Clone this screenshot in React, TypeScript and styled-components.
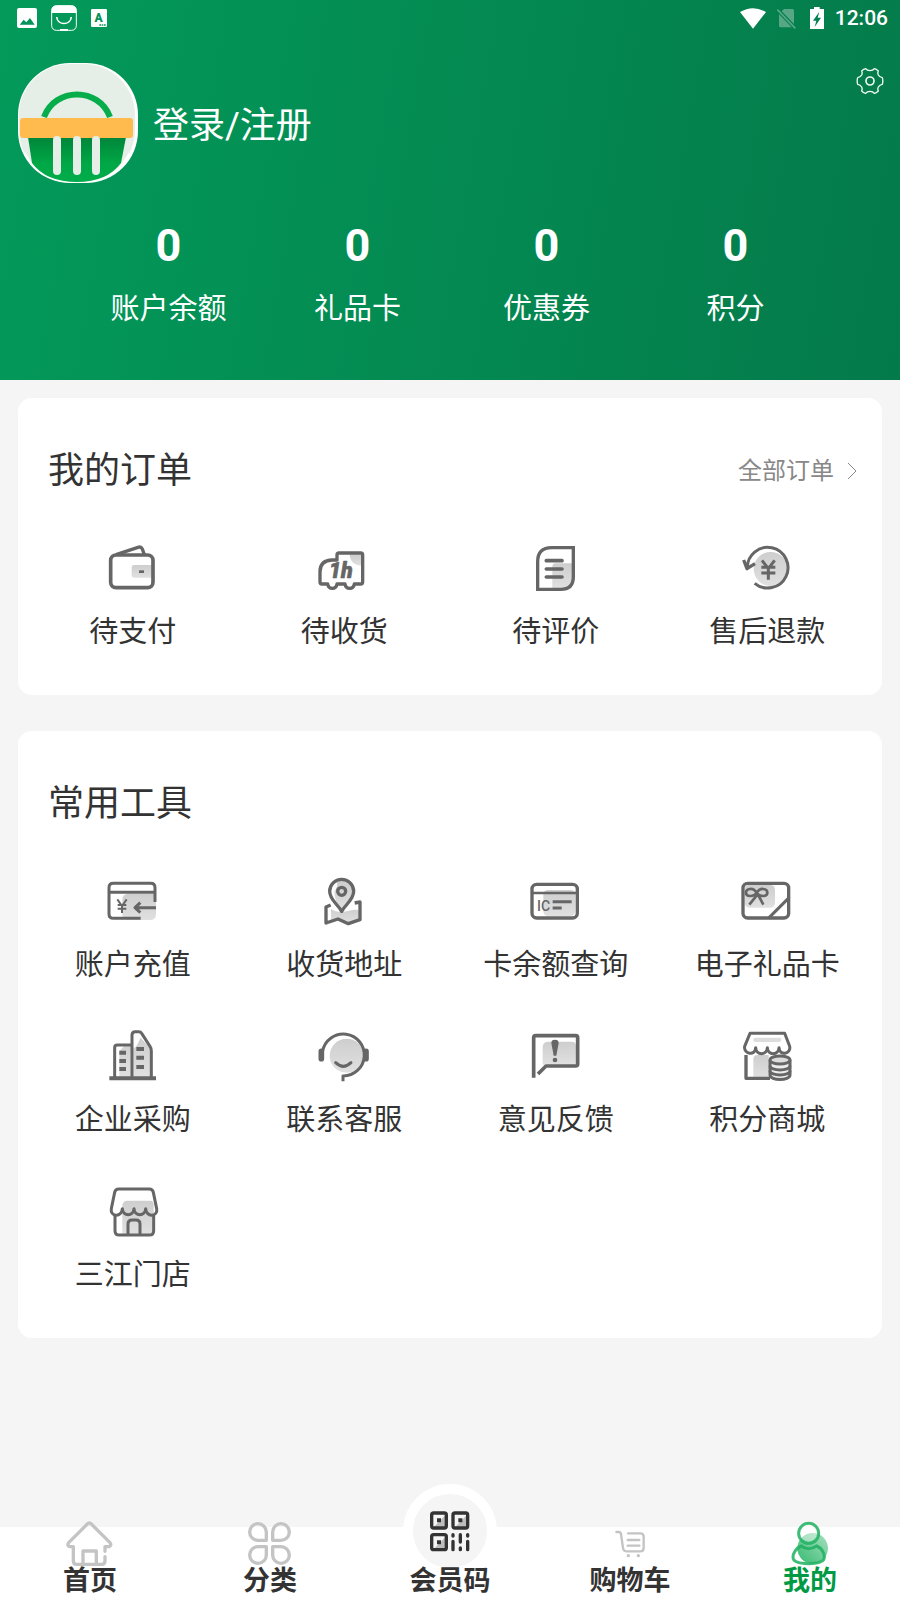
import React from "react";
import styled, { createGlobalStyle, css } from "styled-components";

const INK = "#666666";
const SHADE = "url(#shade)";

const GlobalStyle = createGlobalStyle`
  *, *::before, *::after { box-sizing: border-box; }
  body {
    margin: 0;
    background: #f5f5f5;
    color: #333333;
    font-family: Roboto, "Noto Sans CJK SC", sans-serif;
  }
  button { font: inherit; color: inherit; background: none; border: 0; padding: 0; cursor: pointer; }
  a { color: inherit; text-decoration: none; }
  h1, h2, p { margin: 0; font-weight: 400; }
  svg { display: block; flex: none; }
`;

const Page = styled.div`
  min-height: 100vh;
  display: flex;
  flex-direction: column;
`;

const Header = styled.header`
  color: #ffffff;
  background: linear-gradient(100deg, #039a5a 0%, #047a4a 100%);
  padding-bottom: 51px;
`;

const StatusBar = styled.div`
  height: 36px;
  padding: 0 12px 0 17px;
  display: flex;
  align-items: center;
  justify-content: space-between;
`;

const StatusGroup = styled.div<{ $gap: number }>`
  display: flex;
  align-items: center;
  gap: ${(p) => p.$gap}px;
`;

const Clock = styled.time`
  font-size: 21px;
  line-height: 24px;
  font-weight: 500;
`;

const Profile = styled.div`
  display: flex;
  align-items: flex-start;
  padding: 27px 16px 0 18px;
`;

const LoginButton = styled.button`
  display: flex;
  align-items: center;
  gap: 15px;
  font-size: 36px;
  line-height: 48px;
`;

const LoginText = styled.span`
  padding-top: 6px;
`;

const SettingsButton = styled.button`
  margin-left: auto;
  padding-top: 4px;
`;

const Stats = styled.div`
  display: grid;
  grid-template-columns: repeat(4, 1fr);
  padding: 34px 70px 0 74px;
`;

const Stat = styled.button`
  display: flex;
  flex-direction: column;
  align-items: center;
  gap: 15px;
  font-size: 29px;
  line-height: 40px;
`;

const StatValue = styled.strong`
  font-size: 45px;
  line-height: 57px;
  font-weight: 700;
`;

const Main = styled.main`
  flex: 1;
  display: flex;
  flex-direction: column;
  gap: 36px;
  padding: 18px 18px 36px;
`;

const Card = styled.section`
  background: #ffffff;
  border-radius: 14px;
  padding: 43px 9px;
`;

const CardHead = styled.div`
  height: 60px;
  padding: 0 16px 0 21px;
  display: flex;
  align-items: center;
  justify-content: space-between;
`;

const CardTitle = styled.h2`
  font-size: 36px;
  line-height: 48px;
`;

const MoreLink = styled.a`
  display: flex;
  align-items: center;
  gap: 13px;
  font-size: 24px;
  line-height: 32px;
  color: #888888;
`;

const ToolGrid = styled.div`
  display: grid;
  grid-template-columns: repeat(4, 1fr);
  row-gap: 44px;
  padding-top: 40px;
`;

const Tool = styled.button`
  display: flex;
  flex-direction: column;
  align-items: center;
  gap: 17px;
  font-size: 29px;
  line-height: 40px;
  white-space: nowrap;
`;

const TabBar = styled.nav`
  height: 73px;
  background: #ffffff;
  display: grid;
  grid-template-columns: repeat(5, 1fr);
`;

const Tab = styled.a<{ $active?: boolean }>`
  height: 73px;
  display: flex;
  flex-direction: column;
  align-items: center;
  justify-content: flex-end;
  padding-bottom: 2px;
  color: ${(p) => (p.$active ? "#009944" : "#333333")};
`;

const TabIcon = styled.span<{ $raised?: boolean }>`
  display: flex;
  align-items: center;
  justify-content: center;
  flex: none;
  ${(p) =>
    p.$raised
      ? css`
          width: 94px;
          height: 94px;
          border: 10px solid #ffffff;
          border-radius: 50%;
          background: #f5f5f5;
          margin-bottom: -14px;
        `
      : css`
          width: 48px;
          height: 48px;
          margin-bottom: -4px;
        `}
`;

const TabLabel = styled.span`
  position: relative;
  flex: none;
  font-size: 27px;
  line-height: 34px;
  font-weight: 700;
`;

const LineIcon = ({ children }: { children: React.ReactNode }) => (
  <svg width="54" height="54" viewBox="0 0 162 162" fill="none" stroke={INK} strokeWidth="10" strokeLinejoin="round" aria-hidden="true">
    {children}
  </svg>
);

const GrayIcon = ({ children }: { children: React.ReactNode }) => (
  <svg width="48" height="48" viewBox="0 0 144 144" fill="none" stroke="#c4c4c4" strokeWidth="10" strokeLinecap="round" strokeLinejoin="round" aria-hidden="true">
    {children}
  </svg>
);

const Shades = () => (
  <svg width="0" height="0" aria-hidden="true">
    <defs>
      <linearGradient id="shade" x1="0" y1="0" x2="0" y2="1">
        <stop offset="0" stopColor="#cecece" />
        <stop offset="1" stopColor="#e0e0e0" />
      </linearGradient>
      <linearGradient id="basket" x1="0" y1="0" x2="0" y2="1">
        <stop offset="0" stopColor="#00853a" />
        <stop offset="0.6" stopColor="#00a846" />
        <stop offset="1" stopColor="#00ac4b" />
      </linearGradient>
      <linearGradient id="person" x1="0" y1="1" x2="1" y2="0">
        <stop offset="0" stopColor="#35bb70" />
        <stop offset="1" stopColor="#a9dfc0" />
      </linearGradient>
    </defs>
  </svg>
);

const Avatar = () => (
  <svg width="120" height="120" viewBox="0 0 120 120" aria-hidden="true">
    <rect width="120" height="120" rx="52" fill="#ffffff" />
    <rect x="1" y="1" width="116" height="117" rx="51" fill="#e6eee8" />
    <path d="M14 100Q28 119 59 119Q90 119 104 100L112 88Q104 119 60 120Q14 119 6 88Z" fill="#ffffff" />
    <path d="M10 74H108L103 100Q89 119 59 119Q28 119 14 100Z" fill="url(#basket)" />
    <path d="M26 54C37 24 81 24 92 54" fill="none" stroke="#08ad4b" strokeWidth="6" />
    <rect x="2" y="55" width="113" height="20" rx="3" fill="#ffbb4d" />
    <path d="M39 77V108M59 77V108M78 77V108" stroke="#e6eee8" strokeWidth="8" strokeLinecap="round" />
  </svg>
);

const Gear = () => (
  <svg width="28" height="28" viewBox="0 0 84 84" fill="none" stroke="#f2faf6" strokeWidth="4" strokeLinejoin="round" aria-hidden="true">
    <path d="M29 5Q33 11 42 11Q51 11 55 5Q61 6 67 12Q64 18 67 24Q71 31 79 32Q82 42 79 52Q71 53 67 60Q64 66 67 72Q61 78 55 79Q51 73 42 73Q33 73 29 79Q23 78 17 72Q20 66 17 60Q13 53 5 52Q2 42 5 32Q13 31 17 24Q20 18 17 12Q23 6 29 5Z" />
    <circle cx="42" cy="42" r="12" strokeWidth="5" />
  </svg>
);

const PictureGlyph = () => (
  <svg width="20" height="20" viewBox="0 0 60 60" aria-hidden="true">
    <rect width="60" height="60" rx="6" fill="#ffffff" />
    <path d="M8 50L20 35L28 43L39 30L53 50Z" fill="#05935a" />
  </svg>
);

const BagGlyph = () => (
  <svg width="26" height="26" viewBox="0 0 78 78" aria-hidden="true">
    <rect x="2" y="2" width="74" height="74" rx="14" fill="none" stroke="#ffffff" strokeWidth="3" />
    <path d="M2 24V16Q2 2 16 2H62Q76 2 76 16V24Z" fill="#ffffff" />
    <path d="M17 36C20 62 58 62 61 36" fill="none" stroke="#ffffff" strokeWidth="5" />
    <path d="M27 75H51" stroke="#ffffff" strokeWidth="6" />
  </svg>
);

const LetterGlyph = () => (
  <svg width="16" height="18" viewBox="0 0 48 54" aria-hidden="true">
    <rect width="48" height="54" rx="4" fill="#ffffff" />
    <text x="23" y="39" textAnchor="middle" fontFamily="Roboto, sans-serif" fontWeight="900" fontSize="36" fill="#05935a">A</text>
    <path d="M25 48H30M32 48H37M39 48H44" stroke="#05935a" strokeWidth="4" />
  </svg>
);

const WifiGlyph = () => (
  <svg width="26" height="21" viewBox="0 0 78 63" aria-hidden="true">
    <path d="M0 12Q39 -11 78 12L39 62Z" fill="#ffffff" />
  </svg>
);

const NoSimGlyph = () => (
  <svg width="22" height="21" viewBox="0 0 66 63" aria-hidden="true">
    <path d="M21 3H46Q51 3 51 8V49L14 10ZM6 16L46 58H11Q6 58 6 53Z" fill="#57a786" />
    <path d="M1 5L55 61" stroke="#047f4d" strokeWidth="11" />
    <path d="M1 5L55 61" stroke="#57a786" strokeWidth="5" />
  </svg>
);

const BatteryGlyph = () => (
  <svg width="14" height="22" viewBox="0 0 42 66" aria-hidden="true">
    <path d="M0 6H12V0H29V6H42V66H0Z" fill="#ffffff" />
    <path d="M28 14L9 41H19L14 60L33 32H23Z" fill="#047f4d" />
  </svg>
);

const WalletIcon = () => (
  <LineIcon>
    <path d="M141 72H84Q77 72 77 79V103Q77 110 84 110H141Z" fill={SHADE} stroke="none" />
    <path d="M30 41L96 19Q105 16 109 24L115 41" />
    <rect x="14" y="42" width="127" height="98" rx="16" strokeWidth="11" />
    <path d="M99 92H114" strokeWidth="8" />
  </LineIcon>
);

const TruckIcon = () => (
  <LineIcon>
    <path d="M98 40H133V74C112 74 98 60 98 40Z" fill={SHADE} stroke="none" />
    <path d="M60 57V42Q60 36 66 36H131Q137 36 137 42V123Q137 129 131 129H112Q110 142 98 142Q86 142 84 129H60Q58 142 46 142Q34 142 32 129H15Q9 129 9 123V92Q9 58 46 57Z" />
    <text x="36" y="111" fontFamily="Roboto, sans-serif" fontStyle="italic" fontWeight="900" fontSize="64" fill={INK} stroke={INK} strokeWidth="2">1h</text>
  </LineIcon>
);

const ReviewIcon = () => (
  <LineIcon>
    <path d="M80 67H133V107Q133 143 95 143H70V77Q70 67 80 67Z" fill={SHADE} stroke="none" />
    <path d="M26 145V62Q26 20 68 20H133V107Q133 145 95 145Z" strokeLinejoin="miter" />
    <path d="M52 59H99M52 84H99M52 108H99" strokeLinecap="round" strokeWidth="11" />
  </LineIcon>
);

const RefundIcon = () => (
  <LineIcon>
    <circle cx="92" cy="84" r="51" fill={SHADE} stroke="none" />
    <path d="M22 82A61 61 0 1 1 44 127" strokeWidth="9" />
    <path d="M11 57L21 83L45 68" />
    <path d="M66 58L85 83L104 58M85 83V116M64 79H106M64 96H106" strokeWidth="9" />
  </LineIcon>
);

const RechargeIcon = () => (
  <LineIcon>
    <path d="M68 59H150V120Q150 138 132 138H68Q49 138 49 120V78Q49 59 68 59Z" fill={SHADE} stroke="none" />
    <path d="M104 133H22Q9 133 9 120V41Q9 28 22 28H134Q147 28 147 41V84M9 55H147" strokeWidth="9" />
    <path d="M150 101H88M103 86L87 101L103 116" strokeWidth="9" />
    <path d="M34 76L48 96L62 76M48 96V117M35 93H61M35 104H61" strokeWidth="6" />
  </LineIcon>
);

const AddressIcon = () => (
  <LineIcon>
    <path d="M42 104Q60 118 90 112Q114 104 128 110V137L94 149L63 135L42 140Z" fill={SHADE} stroke="none" />
    <path d="M60 24Q106 10 110 50C110 75 86 92 74 112Q52 82 52 52Q62 42 60 24Z" fill={SHADE} stroke="none" />
    <path d="M74 112C62 90 38 78 38 52A36 36 0 0 1 110 52C110 78 86 90 74 112Z" />
    <circle cx="74" cy="52" r="12" />
    <path d="M41 93L27 99V147L63 135L94 149L129 137V84L113 87" />
  </LineIcon>
);

const CardIcon = () => (
  <LineIcon>
    <rect x="43" y="48" width="96" height="78" rx="14" fill={SHADE} stroke="none" />
    <rect x="9" y="31" width="136" height="101" rx="14" />
    <path d="M9 57H145" strokeWidth="8" />
    <text x="24" y="110" fontFamily="Roboto, sans-serif" fontWeight="500" fontSize="42" fill={INK} stroke="none">IC</text>
    <path d="M71 83H128M71 102H98" strokeWidth="9" />
  </LineIcon>
);

const GiftCardIcon = () => (
  <LineIcon>
    <rect x="14" y="33" width="91" height="68" rx="14" fill={SHADE} stroke="none" />
    <rect x="9" y="28" width="137" height="104" rx="14" />
    <path d="M145 73L85 133" strokeWidth="9" />
    <path d="M50 57C40 38 18 44 18 56C18 68 40 70 50 57C60 38 82 44 82 56C82 68 60 70 50 57ZM52 62L28 92M54 62L70 92" strokeWidth="8" />
  </LineIcon>
);

const CompanyIcon = () => (
  <LineIcon>
    <path d="M54 52H78V146H40V66ZM92 50L104 26L136 62V146H82V60Z" fill={SHADE} stroke="none" />
    <path d="M26 146V56Q26 48 34 48H78" strokeWidth="9" />
    <path d="M78 146V18Q78 8 88 8H98Q104 8 107 13L132 52Q136 58 136 66V146" strokeWidth="9" />
    <path d="M10 148H150M40 71H60M40 96H60M40 120H60M91 60H114M91 86H114M91 114H114" strokeWidth="12" />
  </LineIcon>
);

const ServiceIcon = () => (
  <LineIcon>
    <circle cx="89" cy="80" r="51" fill={SHADE} stroke="none" />
    <path d="M17 66A63 63 0 1 1 78 141V157" strokeWidth="9" />
    <path d="M13 67V89M147 67V89" strokeLinecap="round" strokeWidth="17" />
    <path d="M56 101Q79 123 102 101" strokeLinecap="round" strokeWidth="9" />
  </LineIcon>
);

const FeedbackIcon = () => (
  <LineIcon>
    <path d="M58 38H128Q141 38 141 51V107H41V55Q41 38 58 38Z" fill={SHADE} stroke="none" />
    <path d="M14 146V26Q14 20 20 20H140Q146 20 146 26V105Q146 111 140 111H51L27 135" strokeWidth="11" />
    <path d="M67 42Q67 32 78 32Q89 32 89 42L82 80H74Z" fill={INK} stroke="none" />
    <circle cx="78" cy="93" r="7" fill={INK} stroke="none" />
  </LineIcon>
);

const PointsIcon = () => (
  <LineIcon>
    <rect x="40" y="26" width="84" height="13" rx="6" fill="#dddddd" stroke="none" />
    <path d="M52 78H86V146H40V92Q40 78 52 78Z" fill={SHADE} stroke="none" />
    <path d="M30 13H134L149 52C154 76 118 82 117 56C116 80 83 80 82 56C81 80 48 80 47 56C46 82 10 76 14 52Z" strokeWidth="9" />
    <path d="M18 78V148H90" />
    <path d="M90 93V138C90 156 150 156 150 138V93" fill="#ececec" strokeWidth="9" />
    <ellipse cx="120" cy="93" rx="30" ry="12" fill="#dddddd" strokeWidth="9" />
    <path d="M90 110C90 127 150 127 150 110M90 125C90 142 150 142 150 125" strokeWidth="9" />
  </LineIcon>
);

const StoreIcon = () => (
  <LineIcon>
    <path d="M66 50H132Q143 50 143 62V150H49V66Q49 50 66 50Z" fill={SHADE} stroke="none" />
    <path d="M38 15H130Q140 15 142 25L152 74C157 98 120 102 119 74C118 98 85 98 84 74C83 98 50 98 49 74C48 102 11 98 16 74L26 25Q28 15 38 15Z" strokeWidth="9" />
    <path d="M27 95V140Q27 153 40 153H130Q143 153 143 140V95M66 153V120Q66 108 78 108H90Q102 108 102 120V153" strokeWidth="9" />
  </LineIcon>
);

const HomeIcon = () => (
  <GrayIcon>
    <path d="M117 94V80H129Q138 76 132 68L76 12Q70 6 64 12L8 68Q2 76 11 80H22V123Q22 133 32 133H107Q117 133 117 123V110M51 133V93H91V133" />
  </GrayIcon>
);

const CategoryIcon = () => (
  <GrayIcon>
    <path d="M61 61H36A25 25 0 1 1 61 36ZM80 61V36A25 25 0 1 1 105 61ZM61 80V105A25 25 0 1 1 36 80ZM80 80H105A25 25 0 1 1 80 105Z" />
  </GrayIcon>
);

const CartIcon = () => (
  <GrayIcon>
    <path d="M31 36H38Q44 36 45 42L51 84Q52 94 62 94H103Q113 94 113 84V50Q113 40 103 40H66M65 60H100M65 77H100" strokeWidth="7" />
    <circle cx="67" cy="107" r="5" fill="#c4c4c4" stroke="none" />
    <circle cx="97" cy="107" r="5" fill="#c4c4c4" stroke="none" />
  </GrayIcon>
);

const PersonIcon = () => (
  <svg width="48" height="48" viewBox="0 0 144 144" fill="none" stroke="#1fb062" strokeOpacity="0.85" strokeWidth="9" aria-hidden="true">
    <circle cx="80" cy="85" r="46" fill="url(#person)" stroke="none" />
    <circle cx="68" cy="40" r="30" fill="#ffffff" fillOpacity="0.4" />
    <path d="M46 78C30 84 21 100 21 112C21 126 40 131 68 131C98 131 115 126 115 112C115 98 106 84 92 78Q80 86 68 86Q56 86 46 78Z" />
  </svg>
);

const QrIcon = () => (
  <svg width="42" height="42" viewBox="0 0 126 126" fill="none" stroke="#333333" strokeWidth="10" aria-hidden="true">
    <path d="M52 12V54H12ZM116 12V54H76ZM52 78V120H12Z" fill="#bdbdbd" stroke="none" />
    <rect x="8" y="9" width="44" height="45" rx="6" />
    <rect x="72" y="9" width="44" height="45" rx="6" />
    <rect x="8" y="74" width="44" height="45" rx="6" />
    <path d="M24 31H36M88 31H100M24 97H36" strokeWidth="12" />
    <path d="M72 74V78M72 94V119M94 74V96M94 114V119M116 74V78M116 94V119" strokeLinecap="round" />
  </svg>
);

const stats = ["账户余额", "礼品卡", "优惠券", "积分"];

const orders = [
  { label: "待支付", Icon: WalletIcon },
  { label: "待收货", Icon: TruckIcon },
  { label: "待评价", Icon: ReviewIcon },
  { label: "售后退款", Icon: RefundIcon },
];

const tools = [
  { label: "账户充值", Icon: RechargeIcon },
  { label: "收货地址", Icon: AddressIcon },
  { label: "卡余额查询", Icon: CardIcon },
  { label: "电子礼品卡", Icon: GiftCardIcon },
  { label: "企业采购", Icon: CompanyIcon },
  { label: "联系客服", Icon: ServiceIcon },
  { label: "意见反馈", Icon: FeedbackIcon },
  { label: "积分商城", Icon: PointsIcon },
  { label: "三江门店", Icon: StoreIcon },
];

const tabs = [
  { label: "首页", Icon: HomeIcon },
  { label: "分类", Icon: CategoryIcon },
  { label: "会员码", Icon: QrIcon, raised: true },
  { label: "购物车", Icon: CartIcon },
  { label: "我的", Icon: PersonIcon, active: true },
];

const Tools = ({ items }: { items: { label: string; Icon: React.FC }[] }) => (
  <ToolGrid>
    {items.map(({ label, Icon }) => (
      <Tool key={label} type="button">
        <Icon />
        <span>{label}</span>
      </Tool>
    ))}
  </ToolGrid>
);

export default function App() {
  return (
    <Page lang="zh-CN">
      <GlobalStyle />
      <Header>
        <Shades />
        <StatusBar>
          <StatusGroup $gap={14}>
            <PictureGlyph />
            <BagGlyph />
            <LetterGlyph />
          </StatusGroup>
          <StatusGroup $gap={11}>
            <WifiGlyph />
            <NoSimGlyph />
            <BatteryGlyph />
            <Clock>12:06</Clock>
          </StatusGroup>
        </StatusBar>
        <Profile>
          <LoginButton type="button">
            <Avatar />
            <LoginText>登录/注册</LoginText>
          </LoginButton>
          <SettingsButton type="button" aria-label="设置">
            <Gear />
          </SettingsButton>
        </Profile>
        <Stats>
          {stats.map((label) => (
            <Stat key={label} type="button">
              <StatValue>0</StatValue>
              <span>{label}</span>
            </Stat>
          ))}
        </Stats>
      </Header>
      <Main>
        <Card>
          <CardHead>
            <CardTitle>我的订单</CardTitle>
            <MoreLink href="#orders">
              全部订单
              <svg width="10" height="18" viewBox="0 0 10 18" fill="none" stroke="#888888" aria-hidden="true">
                <path d="M1 1L9 9L1 17" />
              </svg>
            </MoreLink>
          </CardHead>
          <Tools items={orders} />
        </Card>
        <Card>
          <CardHead>
            <CardTitle>常用工具</CardTitle>
          </CardHead>
          <Tools items={tools} />
        </Card>
      </Main>
      <TabBar>
        {tabs.map(({ label, Icon, raised, active }) => (
          <Tab key={label} href={"#" + label} $active={active} aria-current={active ? "page" : undefined}>
            <TabIcon $raised={raised}>
              <Icon />
            </TabIcon>
            <TabLabel>{label}</TabLabel>
          </Tab>
        ))}
      </TabBar>
    </Page>
  );
}
